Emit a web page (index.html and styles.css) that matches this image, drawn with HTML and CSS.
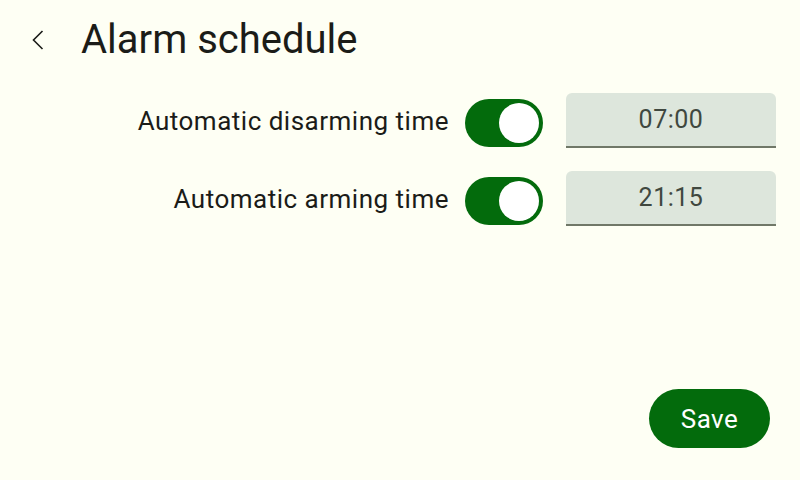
FILE: index.html
```html
<!DOCTYPE html>
<html lang="en">

<head>
    <meta charset="UTF-8">
    <title>Alarm schedule</title>
    <meta name="viewport" content="width=device-width, initial-scale=1.0">
    <link rel="stylesheet" href="styles.css">
</head>

<body>
    <div class="screen">
        <!-- Top bar -->
        <div class="topbar">
            <button class="back" aria-label="Back">
                <svg width="24" height="24" viewBox="0 0 24 24">
                    <path d="M16.5 3 L7.5 12 L16.5 21" fill="none" stroke="#1b1c18" stroke-width="1.6" />
                </svg>
            </button>
            <h1>Alarm schedule</h1>
        </div>

        <div class="schedule">
            <label class="label">Automatic disarming time</label>
            <div class="switch on"><span class="thumb"></span></div>
            <div class="field">07:00</div>

            <label class="label">Automatic arming time</label>
            <div class="switch on"><span class="thumb"></span></div>
            <div class="field">21:15</div>
        </div>

        <div class="actions">
            <button class="save">Save</button>
        </div>
    </div>
</body>

</html>
```

FILE: styles.css
```css
body {
    margin: 0;
    font-family: Roboto, "Noto Sans", sans-serif;
    background-color: #fefff4;
    color: #1b1c18;
}

.screen {
    width: 800px;
    height: 480px;
    display: flex;
    flex-direction: column;
    box-sizing: border-box;
}

.topbar {
    display: flex;
    align-items: center;
    height: 80px;
    padding-left: 26px;
}

.back {
    width: 24px;
    height: 24px;
    padding: 0;
    border: none;
    background: none;
    display: flex;
    margin-right: 31px;
}

h1 {
    margin: 0;
    font-size: 40px;
    font-weight: 400;
    line-height: 1;
}

.schedule {
    display: grid;
    grid-template-columns: 1fr 78px 233px;
    row-gap: 23px;
    align-items: center;
    padding: 13px 24px 0 0;
}

.label {
    text-align: right;
    font-size: 26px;
    letter-spacing: 0.5px;
    padding-right: 16px;
}

.switch {
    width: 78px;
    height: 48px;
    border-radius: 24px;
    background-color: #036b0c;
    position: relative;
    margin-top: 4px;
}

.switch .thumb {
    position: absolute;
    top: 4px;
    right: 4px;
    width: 40px;
    height: 40px;
    border-radius: 50%;
    background-color: #fff;
}

.field {
    height: 53px;
    margin-left: 23px;
    background-color: #dde6dc;
    border-radius: 6px 6px 0 0;
    border-bottom: 2px solid #707868;
    display: flex;
    align-items: center;
    justify-content: center;
    font-size: 25px;
    color: #40483f;
    letter-spacing: 0.5px;
}

.actions {
    margin-top: auto;
    display: flex;
    justify-content: flex-end;
    padding: 0 30px 32px 0;
}

.save {
    width: 121px;
    height: 59px;
    border: none;
    border-radius: 30px;
    background-color: #036b0c;
    color: #fff;
    font-family: Roboto, sans-serif;
    font-size: 26px;
    letter-spacing: 0.5px;
}
```
